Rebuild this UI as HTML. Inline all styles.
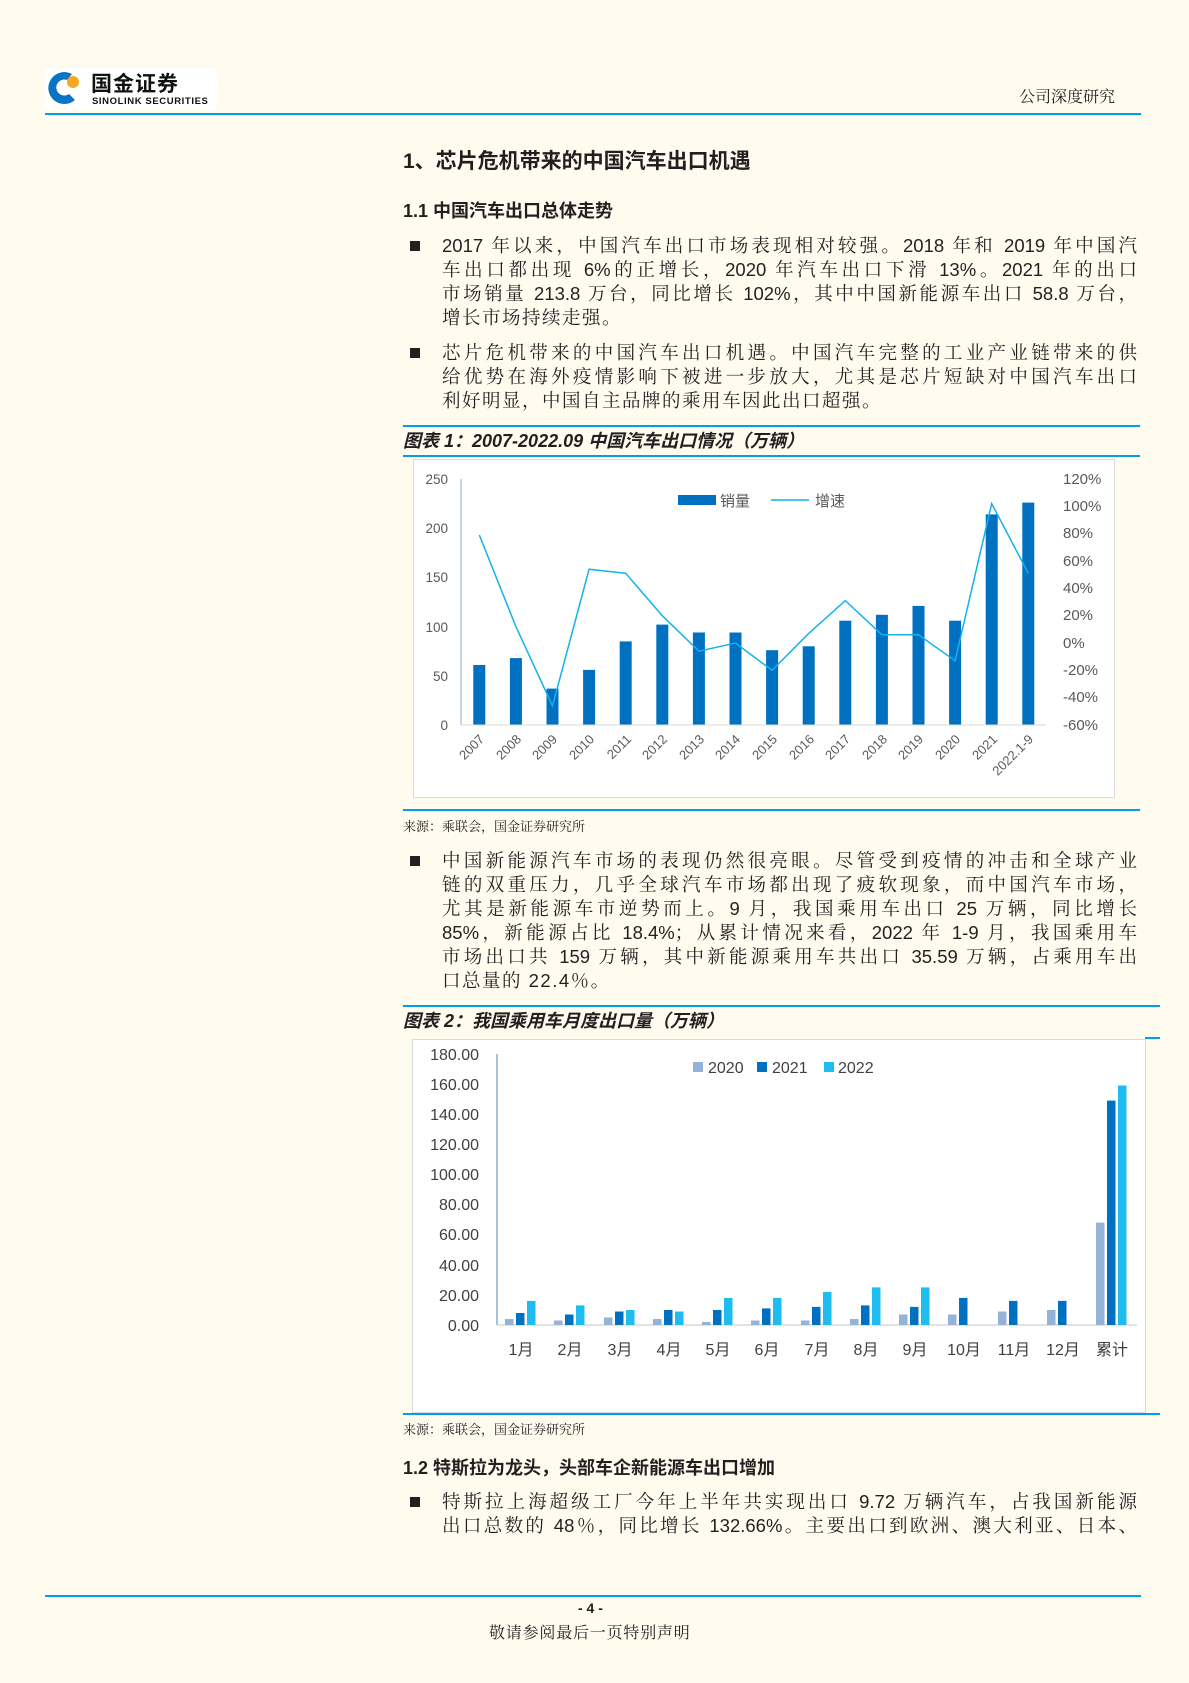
<!DOCTYPE html>
<html><head><meta charset="utf-8"><style>
body{margin:0;background:#fffbef;}
#p{position:relative;width:1189px;height:1683px;overflow:hidden;background:#fffbef;font-family:"Liberation Sans","Noto Serif CJK SC",serif;color:#231f20;}
.a{position:absolute;white-space:nowrap;}
.ln{position:absolute;height:2px;background:#00a0e9;}
.t{position:absolute;left:442px;width:695px;font-size:18.5px;line-height:24px;text-align:justify;text-align-last:justify;white-space:nowrap;}
.t.l{text-align-last:left;letter-spacing:1.5px;}
.b{position:absolute;left:410px;width:10px;height:10px;background:#231f20;}
.h{font-family:"Liberation Sans","Noto Sans CJK SC",sans-serif;font-weight:bold;}
.cap{font-family:"Liberation Sans","Noto Sans CJK SC",sans-serif;font-weight:bold;font-style:italic;font-size:18px;}
.src{font-size:13px;font-family:"Liberation Serif","Noto Serif CJK SC",serif;}
</style></head><body><div id="p">
<div class="a" style="left:45px;top:68px;width:172px;height:41px;background:#fff;"></div>
<svg class="a" style="left:45px;top:68px" width="40" height="41"><path d="M27 6 A16 16 0 1 0 30 32 L24 26 A8 8 0 1 1 22 12 Z" fill="#0a74c4"/><circle cx="28" cy="14" r="6" fill="#f5a623"/></svg>
<div class="a h" style="left:91px;top:68px;font-size:21px;color:#111;letter-spacing:1px">国金证券</div>
<div class="a h" style="left:92px;top:96px;font-size:9.5px;color:#111;letter-spacing:0.6px">SINOLINK SECURITIES</div>
<div class="a" style="left:1019px;top:84px;font-size:16px;font-family:'Liberation Serif','Noto Serif CJK SC',serif">公司深度研究</div>
<div class="ln" style="left:45px;top:113px;width:1096px"></div>

<div class="a h" style="left:403px;top:145px;font-size:21px">1、芯片危机带来的中国汽车出口机遇</div>
<div class="a h" style="left:403px;top:197px;font-size:18px">1.1 中国汽车出口总体走势</div>

<div class="b" style="top:241px"></div>
<div class="t" style="top:234px">2017 年以来，中国汽车出口市场表现相对较强。2018 年和 2019 年中国汽</div>
<div class="t" style="top:258px">车出口都出现 6%的正增长，2020 年汽车出口下滑 13%。2021 年的出口</div>
<div class="t" style="top:282px">市场销量 213.8 万台，同比增长 102%，其中中国新能源车出口 58.8 万台，</div>
<div class="t l" style="top:306px">增长市场持续走强。</div>
<div class="b" style="top:348px"></div>
<div class="t" style="top:341px">芯片危机带来的中国汽车出口机遇。中国汽车完整的工业产业链带来的供</div>
<div class="t" style="top:365px">给优势在海外疫情影响下被进一步放大，尤其是芯片短缺对中国汽车出口</div>
<div class="t l" style="top:389px">利好明显，中国自主品牌的乘用车因此出口超强。</div>

<div class="ln" style="left:403px;top:425px;width:737px"></div>
<div class="a cap" style="left:403px;top:427px">图表 1：2007-2022.09 中国汽车出口情况（万辆）</div>
<div class="ln" style="left:403px;top:455px;width:737px"></div>
<div class="a" style="left:413px;top:459px;width:700px;height:337px;background:#fff;border:1px solid #d9d9d9;"></div>
<div class="ln" style="left:403px;top:809px;width:737px"></div>
<div class="a src" style="left:403px;top:816px">来源：乘联会，国金证券研究所</div>

<div class="b" style="top:856px"></div>
<div class="t" style="top:849px">中国新能源汽车市场的表现仍然很亮眼。尽管受到疫情的冲击和全球产业</div>
<div class="t" style="top:873px">链的双重压力，几乎全球汽车市场都出现了疲软现象，而中国汽车市场，</div>
<div class="t" style="top:897px">尤其是新能源车市逆势而上。9 月，我国乘用车出口 25 万辆，同比增长</div>
<div class="t" style="top:921px">85%，新能源占比 18.4%；从累计情况来看，2022 年 1-9 月，我国乘用车</div>
<div class="t" style="top:945px">市场出口共 159 万辆，其中新能源乘用车共出口 35.59 万辆，占乘用车出</div>
<div class="t l" style="top:969px">口总量的 22.4％。</div>

<div class="ln" style="left:403px;top:1005px;width:757px"></div>
<div class="a cap" style="left:403px;top:1007px">图表 2：我国乘用车月度出口量（万辆）</div>
<div class="ln" style="left:1145px;top:1037px;width:15px"></div>
<div class="a" style="left:412px;top:1039px;width:732px;height:372px;background:#fff;border:1px solid #d9d9d9;"></div>
<div class="ln" style="left:403px;top:1413px;width:757px"></div>
<div class="a src" style="left:403px;top:1419px">来源：乘联会，国金证券研究所</div>

<div class="a h" style="left:403px;top:1454px;font-size:18px">1.2 特斯拉为龙头，头部车企新能源车出口增加</div>
<div class="b" style="top:1497px"></div>
<div class="t" style="top:1490px">特斯拉上海超级工厂今年上半年共实现出口 9.72 万辆汽车，占我国新能源</div>
<div class="t" style="top:1514px">出口总数的 48％，同比增长 132.66%。主要出口到欧洲、澳大利亚、日本、</div>

<div class="ln" style="left:45px;top:1595px;width:1096px;height:1.5px"></div>
<div class="a h" style="left:578px;top:1600px;font-size:14px">- 4 -</div>
<div class="a" style="left:489px;top:1620px;font-size:16px;letter-spacing:0.8px;font-family:'Liberation Serif','Noto Serif CJK SC',serif">敬请参阅最后一页特别声明</div>

<svg class="a" style="left:0;top:0" width="1189" height="1683" font-family="Liberation Sans, Noto Sans CJK SC, sans-serif">
<g fill="#0070c0">
<rect x="473.3" y="665" width="12" height="60"/><rect x="509.9" y="658.1" width="12" height="66.9"/><rect x="546.5" y="688.6" width="12" height="36.4"/><rect x="583.1" y="669.9" width="12" height="55.1"/><rect x="619.7" y="641.4" width="12" height="83.6"/><rect x="656.3" y="624.6" width="12" height="100.4"/><rect x="692.9" y="632.5" width="12" height="92.5"/><rect x="729.5" y="632.5" width="12" height="92.5"/><rect x="766.1" y="650.2" width="12" height="74.8"/><rect x="802.7" y="646.3" width="12" height="78.7"/><rect x="839.3" y="620.7" width="12" height="104.3"/><rect x="875.9" y="614.8" width="12" height="110.2"/><rect x="912.5" y="605.9" width="12" height="119.1"/><rect x="949.1" y="620.7" width="12" height="104.3"/><rect x="985.7" y="514.4" width="12" height="210.6"/><rect x="1022.3" y="502.6" width="12" height="222.4"/>
<rect x="678" y="495" width="38" height="10"/>
</g>
<polyline fill="none" stroke="#13b2ec" stroke-width="1.5" points="479.3,535 515.9,626.6 552.5,705.9 589.1,569.2 625.7,573.3 662.3,615.7 698.9,651.2 735.5,643 772.1,670.3 808.7,633.4 845.3,600.6 881.9,634.8 918.5,634.8 955.1,660.8 991.7,503.6 1028.3,573.3"/>
<line x1="771" y1="500" x2="809" y2="500" stroke="#13b2ec" stroke-width="1.5"/>
<line x1="461" y1="479" x2="461" y2="725" stroke="#8eaadb"/><line x1="461" y1="725" x2="1046" y2="725" stroke="#d9d9d9"/>
<g font-size="13.5" fill="#595959" text-anchor="end">
<text x="448" y="730">0</text><text x="448" y="681">50</text><text x="448" y="632">100</text><text x="448" y="582">150</text><text x="448" y="533">200</text><text x="448" y="484">250</text></g>
<g font-size="15" fill="#595959">
<text x="1063" y="484">120%</text><text x="1063" y="511">100%</text><text x="1063" y="538">80%</text><text x="1063" y="566">60%</text><text x="1063" y="593">40%</text><text x="1063" y="620">20%</text><text x="1063" y="648">0%</text><text x="1063" y="675">-20%</text><text x="1063" y="702">-40%</text><text x="1063" y="730">-60%</text>
<text x="720" y="506">销量</text><text x="815" y="506">增速</text></g>
<g font-size="13" fill="#595959" text-anchor="end">
<text transform="translate(485,740) rotate(-45)">2007</text><text transform="translate(522,740) rotate(-45)">2008</text><text transform="translate(558,740) rotate(-45)">2009</text><text transform="translate(595,740) rotate(-45)">2010</text><text transform="translate(632,740) rotate(-45)">2011</text><text transform="translate(668,740) rotate(-45)">2012</text><text transform="translate(705,740) rotate(-45)">2013</text><text transform="translate(741,740) rotate(-45)">2014</text><text transform="translate(778,740) rotate(-45)">2015</text><text transform="translate(815,740) rotate(-45)">2016</text><text transform="translate(851,740) rotate(-45)">2017</text><text transform="translate(888,740) rotate(-45)">2018</text><text transform="translate(924,740) rotate(-45)">2019</text><text transform="translate(961,740) rotate(-45)">2020</text><text transform="translate(998,740) rotate(-45)">2021</text><text transform="translate(1034,740) rotate(-45)">2022.1-9</text></g>

<line x1="497" y1="1054" x2="497" y2="1325" stroke="#4f81bd"/><line x1="497" y1="1325" x2="1137" y2="1325" stroke="#d9d9d9" stroke-width="1.5"/>
<g font-size="16" fill="#404040" text-anchor="end">
<text x="479" y="1331">0.00</text><text x="479" y="1301">20.00</text><text x="479" y="1271">40.00</text><text x="479" y="1240">60.00</text><text x="479" y="1210">80.00</text><text x="479" y="1180">100.00</text><text x="479" y="1150">120.00</text><text x="479" y="1120">140.00</text><text x="479" y="1090">160.00</text><text x="479" y="1060">180.00</text></g>
<rect x="693" y="1062" width="10" height="10" fill="#95b3d7"/><rect x="757" y="1062" width="10" height="10" fill="#0070c0"/><rect x="824" y="1062" width="10" height="10" fill="#1fbcf0"/>
<g font-size="16" fill="#404040"><text x="708" y="1073">2020</text><text x="772" y="1073">2021</text><text x="838" y="1073">2022</text></g>
<g font-size="16" fill="#404040" text-anchor="middle">
<text x="521" y="1355">1月</text><text x="570" y="1355">2月</text><text x="620" y="1355">3月</text><text x="669" y="1355">4月</text><text x="718" y="1355">5月</text><text x="767" y="1355">6月</text><text x="817" y="1355">7月</text><text x="866" y="1355">8月</text><text x="915" y="1355">9月</text><text x="964" y="1355">10月</text><text x="1014" y="1355">11月</text><text x="1063" y="1355">12月</text><text x="1112" y="1355">累计</text></g>
<g fill="#95b3d7">
<rect x="505" y="1319" width="8.5" height="6"/><rect x="554" y="1320.5" width="8.5" height="4.5"/><rect x="604" y="1317.5" width="8.5" height="7.5"/><rect x="653" y="1319" width="8.5" height="6"/><rect x="702" y="1322" width="8.5" height="3"/><rect x="751" y="1320.5" width="8.5" height="4.5"/><rect x="801" y="1320.5" width="8.5" height="4.5"/><rect x="850" y="1319" width="8.5" height="6"/><rect x="899" y="1314.5" width="8.5" height="10.5"/><rect x="948" y="1314.5" width="8.5" height="10.5"/><rect x="998" y="1311.5" width="8.5" height="13.5"/><rect x="1047" y="1310" width="8.5" height="15"/><rect x="1096" y="1222.6" width="8.5" height="102.4"/></g>
<g fill="#0070c0">
<rect x="516" y="1313" width="8.5" height="12"/><rect x="565" y="1314.5" width="8.5" height="10.5"/><rect x="615" y="1311.5" width="8.5" height="13.5"/><rect x="664" y="1310" width="8.5" height="15"/><rect x="713" y="1310" width="8.5" height="15"/><rect x="762" y="1308.4" width="8.5" height="16.6"/><rect x="812" y="1306.9" width="8.5" height="18.1"/><rect x="861" y="1305.4" width="8.5" height="19.6"/><rect x="910" y="1306.9" width="8.5" height="18.1"/><rect x="959" y="1297.9" width="8.5" height="27.1"/><rect x="1009" y="1300.9" width="8.5" height="24.1"/><rect x="1058" y="1300.9" width="8.5" height="24.1"/><rect x="1107" y="1100.6" width="8.5" height="224.4"/></g>
<g fill="#1fbcf0">
<rect x="527" y="1300.9" width="8.5" height="24.1"/><rect x="576" y="1305.4" width="8.5" height="19.6"/><rect x="626" y="1310" width="8.5" height="15"/><rect x="675" y="1311.5" width="8.5" height="13.5"/><rect x="724" y="1297.9" width="8.5" height="27.1"/><rect x="773" y="1297.9" width="8.5" height="27.1"/><rect x="823" y="1291.9" width="8.5" height="33.1"/><rect x="872" y="1287.4" width="8.5" height="37.6"/><rect x="921" y="1287.4" width="8.5" height="37.6"/><rect x="1118" y="1085.5" width="8.5" height="239.5"/></g>
</svg>
</div></body></html>
